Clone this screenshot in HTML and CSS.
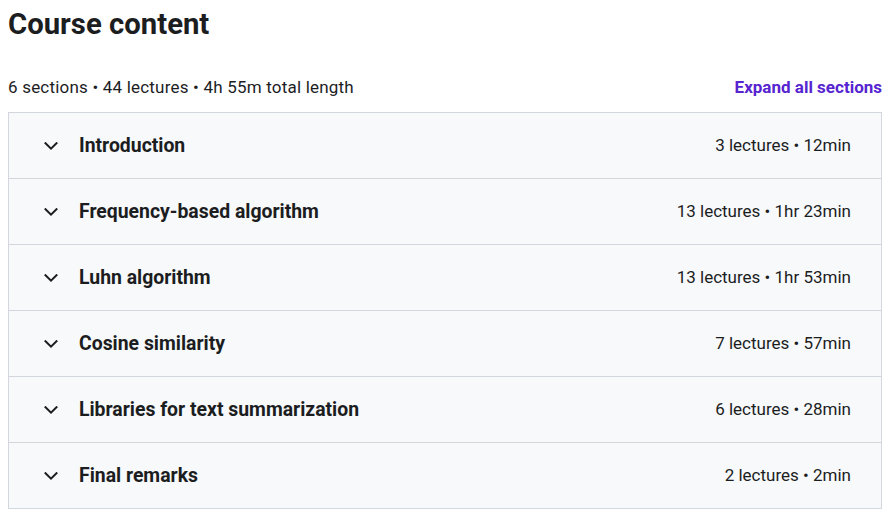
FILE: index.html
```html
<!DOCTYPE html>
<html>
<head>
<meta charset="utf-8">
<link rel="stylesheet" href="styles.css">
</head>
<body>
<div class="page">
  <h2 class="title">Course content</h2>
  <div class="meta">
    <span class="summary">6 sections • 44 lectures • 4h 55m total length</span>
    <button class="expand">Expand all sections</button>
  </div>
  <div class="sections">
    <div class="row">
      <svg class="chev" viewBox="0 0 14 8"><path d="M1.5 1.2L7 6.6 12.5 1.2"/></svg>
      <span class="name">Introduction</span>
      <span class="info">3 lectures • 12min</span>
    </div>
    <div class="row">
      <svg class="chev" viewBox="0 0 14 8"><path d="M1.5 1.2L7 6.6 12.5 1.2"/></svg>
      <span class="name">Frequency-based algorithm</span>
      <span class="info">13 lectures • 1hr 23min</span>
    </div>
    <div class="row">
      <svg class="chev" viewBox="0 0 14 8"><path d="M1.5 1.2L7 6.6 12.5 1.2"/></svg>
      <span class="name">Luhn algorithm</span>
      <span class="info">13 lectures • 1hr 53min</span>
    </div>
    <div class="row">
      <svg class="chev" viewBox="0 0 14 8"><path d="M1.5 1.2L7 6.6 12.5 1.2"/></svg>
      <span class="name">Cosine similarity</span>
      <span class="info">7 lectures • 57min</span>
    </div>
    <div class="row">
      <svg class="chev" viewBox="0 0 14 8"><path d="M1.5 1.2L7 6.6 12.5 1.2"/></svg>
      <span class="name">Libraries for text summarization</span>
      <span class="info">6 lectures • 28min</span>
    </div>
    <div class="row">
      <svg class="chev" viewBox="0 0 14 8"><path d="M1.5 1.2L7 6.6 12.5 1.2"/></svg>
      <span class="name">Final remarks</span>
      <span class="info">2 lectures • 2min</span>
    </div>
  </div>
</div>
</body>
</html>
```

FILE: styles.css
```css
html, body {
  margin: 0;
  padding: 0;
  background: #ffffff;
}
body {
  font-family: Roboto, "Liberation Sans", Arial, sans-serif;
  color: #1c1d1f;
}
.page {
  padding: 6px 9px 0 8px;
}
.title {
  margin: 0;
  font-size: 29.3px;
  line-height: 36px;
  font-weight: 700;
  color: #1c1d1f;
}
.meta {
  display: flex;
  justify-content: space-between;
  align-items: center;
  margin-top: 33px;
  height: 24px;
  margin-bottom: 13px;
}
.summary {
  font-size: 17px;
  letter-spacing: 0.2px;
  color: #1c1d1f;
}
.expand {
  background: none;
  border: none;
  padding: 0;
  font-family: inherit;
  font-size: 17px;
  font-weight: 700;
  color: #5624d0;
}
.sections {
  border: 1px solid #d1d7dc;
  border-bottom: none;
}
.row {
  display: flex;
  align-items: center;
  height: 65px;
  border-bottom: 1px solid #d1d7dc;
  background: #f7f9fa;
  padding: 0 30px 0 35px;
}
.chev {
  width: 14px;
  height: 8px;
  flex: none;
  fill: none;
  stroke: #1c1d1f;
  stroke-width: 2;
  stroke-linecap: square;
  stroke-linejoin: miter;
  margin-right: 21px;
  margin-top: 1px;
}
.name {
  flex: 1;
  font-size: 19.4px;
  font-weight: 700;
  color: #1c1d1f;
}
.info {
  font-size: 17px;
  color: #1c1d1f;
  margin-bottom: 2px;
}
```
